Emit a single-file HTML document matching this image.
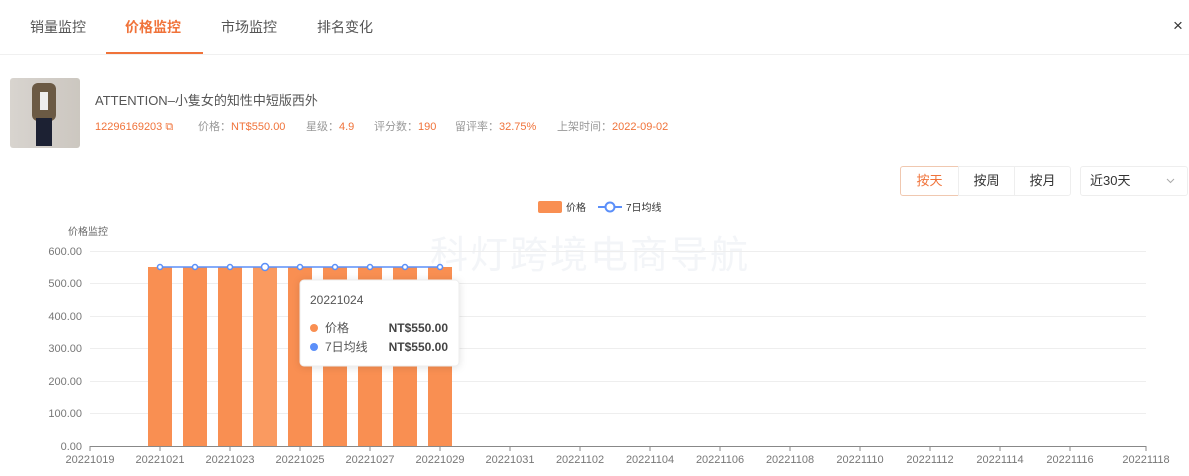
<!DOCTYPE html>
<html><head><meta charset="utf-8"><style>
body{margin:0;width:1189px;height:476px;background:#fff;font-family:"Liberation Sans","Noto Sans CJK SC",sans-serif;position:relative;overflow:hidden;color:#333}
.a{position:absolute;white-space:nowrap}
.tab{top:17px;font-size:14px;color:#555}
.m{top:121px;font-size:11px;color:#999;line-height:13px}
.o{color:#f0733a}
</style></head><body>
<div class="a tab" style="left:30px">销量监控</div>
<div class="a tab" style="left:125px;color:#f0733a;font-weight:bold">价格监控</div>
<div class="a tab" style="left:221px">市场监控</div>
<div class="a tab" style="left:317px">排名变化</div>
<div class="a" style="left:106px;top:52px;width:97px;height:2px;background:#f0733a"></div>
<div class="a" style="left:0;top:54px;width:1189px;height:1px;background:#f0f0f0"></div>
<div class="a" style="left:1173px;top:16px;font-size:17px;color:#333">×</div>
<div class="a" style="left:10px;top:78px;width:70px;height:70px;border-radius:3px;background:linear-gradient(90deg,#d8d4cf 0%,#ccc7c0 100%)">
<div class="a" style="left:22px;top:5px;width:24px;height:38px;background:#6b5a44;border-radius:6px"></div>
<div class="a" style="left:30px;top:14px;width:8px;height:18px;background:#eee"></div>
<div class="a" style="left:26px;top:40px;width:16px;height:28px;background:#1c2133"></div>
</div>
<div class="a" style="left:95px;top:90px;font-size:13px;color:#555">ATTENTION–小隻女的知性中短版西外</div>
<div class="a m" style="left:95px"><span class="o">12296169203 ⧉</span></div>
<div class="a m" style="left:198px">价格：<span class="o">NT$550.00</span></div>
<div class="a m" style="left:306px">星级：<span class="o">4.9</span></div>
<div class="a m" style="left:374px">评分数：<span class="o">190</span></div>
<div class="a m" style="left:455px">留评率：<span class="o">32.75%</span></div>
<div class="a m" style="left:557px">上架时间：<span class="o">2022-09-02</span></div>
<div class="a" style="left:900px;top:166px;width:57px;height:28px;border:1px solid #f0c8b0;border-radius:3px 0 0 3px;font-size:13px;color:#f0733a;text-align:center;line-height:28px">按天</div>
<div class="a" style="left:958px;top:166px;width:55px;height:28px;border:1px solid #eee;font-size:13px;text-align:center;line-height:28px">按周</div>
<div class="a" style="left:1014px;top:166px;width:55px;height:28px;border:1px solid #eee;border-radius:0 3px 3px 0;font-size:13px;text-align:center;line-height:28px">按月</div>
<div class="a" style="left:1080px;top:166px;width:106px;height:28px;border:1px solid #eee;border-radius:3px;font-size:13px;line-height:28px;text-indent:9px">近30天
<svg style="position:absolute;right:12px;top:11px" width="9" height="6"><path d="M1 1L4.5 4.5L8 1" fill="none" stroke="#aaa" stroke-width="1"/></svg></div>
<div class="a" style="left:430px;top:224px;font-size:38px;color:rgba(200,210,225,0.22);letter-spacing:2px">科灯跨境电商导航</div>
<svg class="a" style="left:0;top:0" width="1189" height="476" font-family="Liberation Sans, Noto Sans CJK SC, sans-serif">
<rect x="538" y="201" width="24" height="12" rx="2" fill="#f98f52"/>
<text x="566" y="211" font-size="10" fill="#333">价格</text>
<line x1="598" y1="207" x2="622" y2="207" stroke="#5b8ff9" stroke-width="2"/>
<circle cx="610" cy="207" r="4.5" fill="#fff" stroke="#5b8ff9" stroke-width="2"/>
<text x="626" y="211" font-size="10" fill="#333">7日均线</text>
<text x="68" y="235" font-size="10" fill="#666">价格监控</text>
<g stroke="#eee" stroke-width="1">
<line x1="90" y1="251.5" x2="1146" y2="251.5"/><line x1="90" y1="283.5" x2="1146" y2="283.5"/><line x1="90" y1="316.5" x2="1146" y2="316.5"/><line x1="90" y1="348.5" x2="1146" y2="348.5"/><line x1="90" y1="381.5" x2="1146" y2="381.5"/><line x1="90" y1="413.5" x2="1146" y2="413.5"/>
</g>
<g font-size="11" fill="#777" text-anchor="end">
<text x="82" y="255">600.00</text><text x="82" y="287">500.00</text><text x="82" y="320">400.00</text><text x="82" y="352">300.00</text><text x="82" y="385">200.00</text><text x="82" y="417">100.00</text><text x="82" y="450">0.00</text>
</g>
<line x1="90" y1="446.5" x2="1146" y2="446.5" stroke="#888"/>
<g fill="#f98f52">
<rect x="148" y="267" width="24" height="179"/><rect x="183" y="267" width="24" height="179"/><rect x="218" y="267" width="24" height="179"/><rect x="253" y="267" width="24" height="179" fill="#fa9a60"/><rect x="288" y="267" width="24" height="179"/><rect x="323" y="267" width="24" height="179"/><rect x="358" y="267" width="24" height="179"/><rect x="393" y="267" width="24" height="179"/><rect x="428" y="267" width="24" height="179"/>
</g>
<line x1="160" y1="267" x2="440" y2="267" stroke="#5b8ff9" stroke-width="1.5"/>
<g fill="#fff" stroke="#5b8ff9" stroke-width="1.5">
<circle cx="160" cy="267" r="2.5"/><circle cx="195" cy="267" r="2.5"/><circle cx="230" cy="267" r="2.5"/><circle cx="265" cy="267" r="3.5"/><circle cx="300" cy="267" r="2.5"/><circle cx="335" cy="267" r="2.5"/><circle cx="370" cy="267" r="2.5"/><circle cx="405" cy="267" r="2.5"/><circle cx="440" cy="267" r="2.5"/>
</g>
<g font-size="11" fill="#777" text-anchor="middle">
<text x="90" y="463">20221019</text><text x="160" y="463">20221021</text><text x="230" y="463">20221023</text><text x="300" y="463">20221025</text><text x="370" y="463">20221027</text><text x="440" y="463">20221029</text><text x="510" y="463">20221031</text><text x="580" y="463">20221102</text><text x="650" y="463">20221104</text><text x="720" y="463">20221106</text><text x="790" y="463">20221108</text><text x="860" y="463">20221110</text><text x="930" y="463">20221112</text><text x="1000" y="463">20221114</text><text x="1070" y="463">20221116</text><text x="1146" y="463">20221118</text>
</g>
<g stroke="#888">
<line x1="90" y1="446" x2="90" y2="451"/><line x1="160" y1="446" x2="160" y2="451"/><line x1="230" y1="446" x2="230" y2="451"/><line x1="300" y1="446" x2="300" y2="451"/><line x1="370" y1="446" x2="370" y2="451"/><line x1="440" y1="446" x2="440" y2="451"/><line x1="510" y1="446" x2="510" y2="451"/><line x1="580" y1="446" x2="580" y2="451"/><line x1="650" y1="446" x2="650" y2="451"/><line x1="720" y1="446" x2="720" y2="451"/><line x1="790" y1="446" x2="790" y2="451"/><line x1="860" y1="446" x2="860" y2="451"/><line x1="930" y1="446" x2="930" y2="451"/><line x1="1000" y1="446" x2="1000" y2="451"/><line x1="1070" y1="446" x2="1070" y2="451"/><line x1="1146" y1="446" x2="1146" y2="451"/>
</g>
<rect x="300" y="280" width="159" height="86" rx="4" fill="#fff" stroke="#eee" style="filter:drop-shadow(0 1px 4px rgba(0,0,0,0.12))"/>
<text x="310" y="304" font-size="12" fill="#555">20221024</text>
<circle cx="314" cy="328" r="4" fill="#f98f52"/>
<text x="325" y="332" font-size="12" fill="#555">价格</text>
<text x="448" y="332" font-size="12" fill="#444" font-weight="bold" text-anchor="end">NT$550.00</text>
<circle cx="314" cy="347" r="4" fill="#5b8ff9"/>
<text x="325" y="351" font-size="12" fill="#555">7日均线</text>
<text x="448" y="351" font-size="12" fill="#444" font-weight="bold" text-anchor="end">NT$550.00</text>
</svg>
</body></html>
